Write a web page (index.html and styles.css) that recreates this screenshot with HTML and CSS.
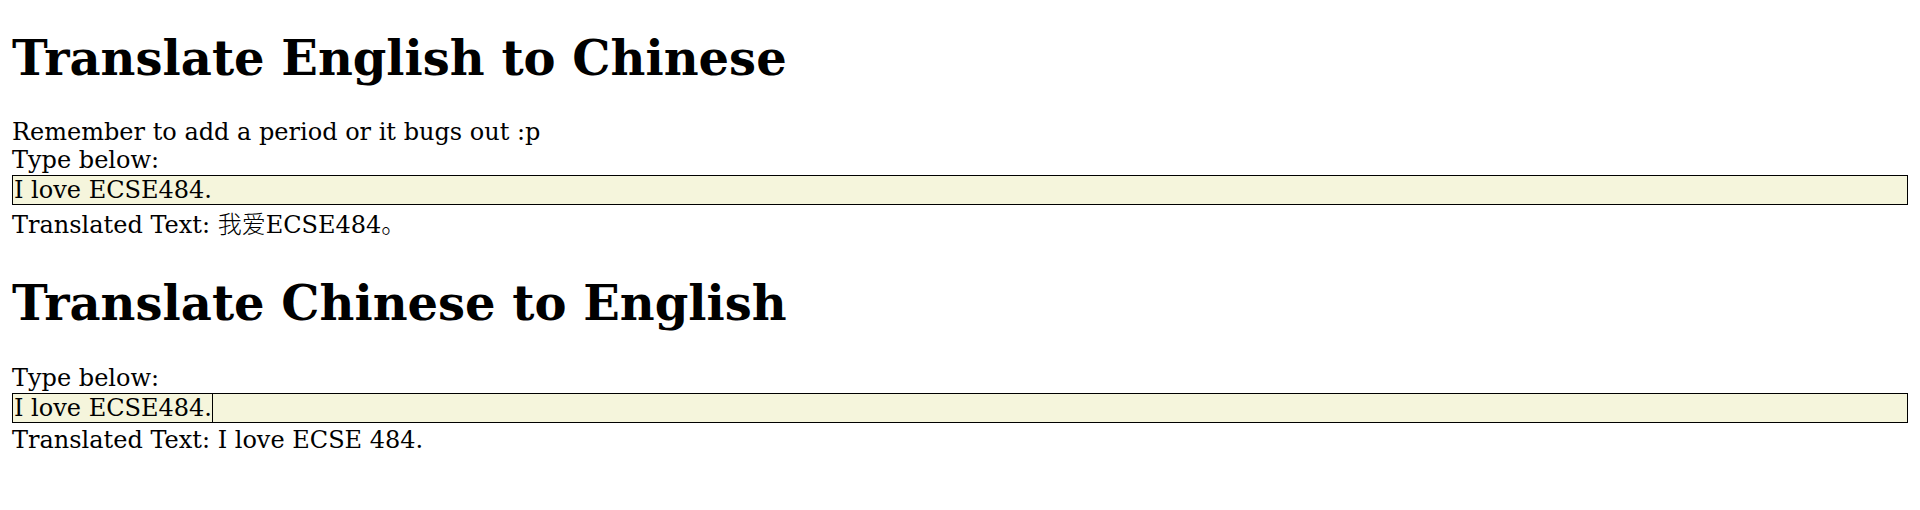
FILE: index.html
```html
<!DOCTYPE html>
<html>
<head>
<meta charset="utf-8">
<title>Translate</title>
<link rel="stylesheet" href="styles.css">
</head>
<body>
<section class="block">
  <h1 class="title">Translate English to Chinese</h1>
  <div class="line">Remember to add a period or it bugs out :p</div>
  <div class="line">Type below:</div>
  <div class="field">
    <input class="box" type="text" value="I love ECSE484.">
  </div>
  <div class="line">Translated Text: <span class="cjk">我爱</span>ECSE484<span class="cjk">。</span></div>
</section>
<section class="block">
  <h1 class="title">Translate Chinese to English</h1>
  <div class="line">Type below:</div>
  <div class="field">
    <input class="box" type="text" value="I love ECSE484.">
    <div class="caret-layer" aria-hidden="true"><span class="ghost">I love ECSE484.</span><span class="caret"></span></div>
  </div>
  <div class="line result">Translated Text: I love ECSE 484.</div>
</section>
</body>
</html>
```
FILE: styles.css
```css
html, body {
  background: #ffffff;
}
body {
  margin: 0 12px 12px;
  padding: 0;
  font-family: "DejaVu Serif", "Noto Sans CJK SC", serif;
  font-size: 24px;
  color: #000000;
}
.block {
  display: flex;
  flex-direction: column;
}
.title {
  font-family: "DejaVu Serif", serif;
  font-size: 48px;
  font-weight: bold;
  line-height: normal;
  margin: 30px 0 32px;
}
.block + .block .title {
  margin-top: 35px;
  margin-bottom: 33px;
}
.line {
  line-height: normal;
}
.result {
  margin-top: 3px;
}
.cjk {
  font-family: "Noto Sans CJK SC", sans-serif;
  font-weight: 300;
}
.field {
  position: relative;
  margin-top: 1px;
}
.box {
  display: block;
  width: 100%;
  box-sizing: border-box;
  margin: 0;
  padding: 0 1px;
  border: 1px solid #000000;
  background: #f5f5dc;
  font-family: "DejaVu Serif", serif;
  font-size: 24px;
  line-height: normal;
  color: #000000;
  outline: none;
}
.caret-layer {
  position: absolute;
  left: 2px;
  top: 1px;
  bottom: 1px;
  display: flex;
  align-items: stretch;
  font-family: "DejaVu Serif", serif;
  font-size: 24px;
  pointer-events: none;
}
.ghost {
  visibility: hidden;
  white-space: pre;
}
.caret {
  width: 0;
  border-left: 1px solid #000000;
}
```
